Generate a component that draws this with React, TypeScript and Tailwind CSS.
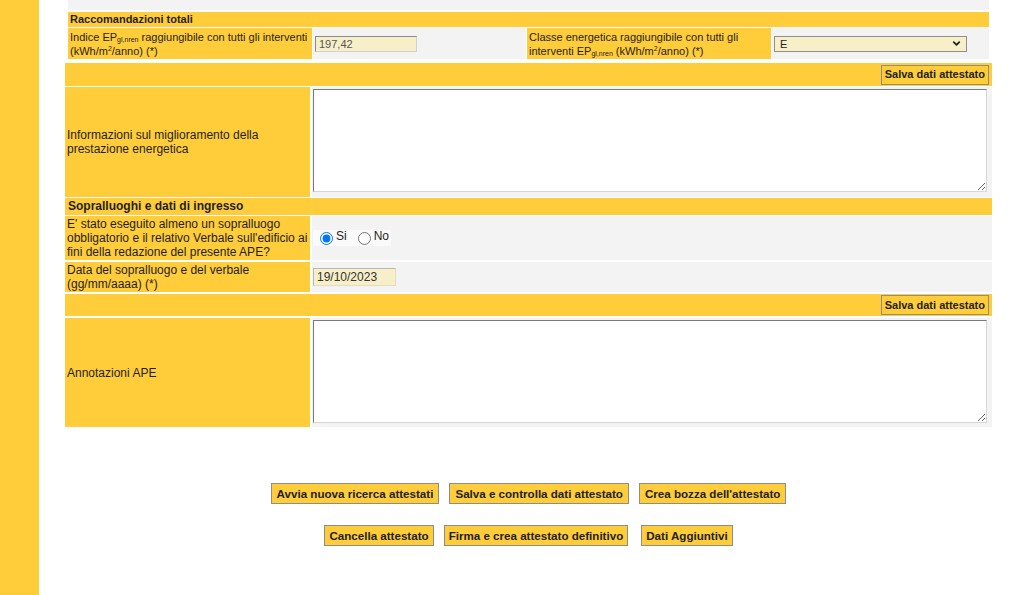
import { ChevronDown } from 'lucide-react'

function SaveBar({ h }: { h: string }) {
  return (
    <div className={`flex items-center justify-end bg-[#ffcc3a] pr-[3px] ${h}`}>
      <button className="h-[20px] border border-[#8c8c8c] bg-[#ffcc3a] px-[3px] text-[11px] font-bold leading-none text-[#222]">
        Salva dati attestato
      </button>
    </div>
  )
}

function ActionButton({ label, className = '' }: { label: string; className?: string }) {
  return (
    <button
      className={`h-[21px] border border-[#8c8c8c] bg-[#ffcc3a] text-[11.6px] font-bold leading-none text-[#222] ${className}`}
    >
      {label}
    </button>
  )
}

export default function App() {
  return (
    <div className="flex h-[595px] overflow-hidden bg-white font-['Liberation_Sans',Arial,sans-serif] text-[#1f1f1f]">
      <div className="w-[39px] shrink-0 bg-[#ffcc3a]" />

      <div className="flex-1">
        <div className="ml-[26px] w-[927px]">
          {/* Raccomandazioni totali */}
          <div className="mx-[3px] text-[11px] leading-[14px]">
            <div className="h-[10px] bg-[#f3f3f3]" />
            <div className="mt-[2px] h-[15px] bg-[#ffcc3a] px-[2px] font-bold leading-[15px]">
              Raccomandazioni totali
            </div>
            <div className="mt-px grid h-[31px] grid-cols-[244px_213px_244px_1fr] gap-px">
              <div className="flex items-center bg-[#ffcc3a] px-[2px]">
                <p>
                  Indice EP<sub className="text-[7px]">gl,nren</sub> raggiungibile con tutti gli interventi
                  (kWh/m<sup className="text-[7px]">2</sup>/anno) (*)
                </p>
              </div>
              <div className="flex items-center bg-[#f3f3f3]">
                <input
                  readOnly
                  value="197,42"
                  className="ml-[2px] h-[16px] w-[102px] border border-[#d0d0d0] border-t-[#8a8a8a] border-l-[#8a8a8a] bg-[#f7efc8] px-[3px] text-[11px] text-[#555]"
                />
              </div>
              <div className="flex items-center bg-[#ffcc3a] px-[2px]">
                <p>
                  Classe energetica raggiungibile con tutti gli interventi EP
                  <sub className="text-[7px]">gl,nren</sub> (kWh/m<sup className="text-[7px]">2</sup>/anno) (*)
                </p>
              </div>
              <div className="flex items-center bg-[#f3f3f3]">
                <div className="ml-[2px] flex h-[16px] w-[193px] items-center justify-between border border-[#8f8f8f] bg-[#f7efc8] pl-[5px] pr-[4px] text-[11px] text-[#222]">
                  <span>E</span>
                  <ChevronDown size={11} strokeWidth={4} />
                </div>
              </div>
            </div>
          </div>

          {/* Informazioni */}
          <div className="mt-[4px] text-[12px] leading-[14px]">
            <SaveBar h="h-[23px]" />
            <div className="mt-px grid h-[110px] grid-cols-[245px_1fr] gap-[2px]">
              <div className="flex items-center bg-[#ffcc3a] px-[2px]">
                Informazioni sul miglioramento della prestazione energetica
              </div>
              <div className="bg-[#f3f3f3] pl-px pt-[2px]">
                <textarea className="block h-[103px] w-[674px] border border-[#d6d6d6] border-t-[#7a7a7a] border-l-[#7a7a7a] bg-white" />
              </div>
            </div>

            {/* Sopralluoghi */}
            <div className="mt-px h-[17px] bg-[#ffcc3a] px-[3px] font-bold leading-[17px]">
              Sopralluoghi e dati di ingresso
            </div>
            <div className="mt-px grid h-[44px] grid-cols-[245px_1fr] gap-[2px]">
              <div className="flex items-center bg-[#ffcc3a] px-[2px]">
                E' stato eseguito almeno un sopralluogo obbligatorio e il relativo Verbale sull'edificio ai fini della
                redazione del presente APE?
              </div>
              <div className="flex items-center bg-[#f3f3f3] pl-px">
                <div className="flex h-[16px] items-center bg-[#fafafa] pr-[2px]">
                  <input type="radio" name="sopralluogo" defaultChecked className="m-0 ml-[7px] h-[13px] w-[13px]" />
                  <span className="ml-[3px] -mt-[5px]">Si</span>
                  <input type="radio" name="sopralluogo" className="m-0 ml-[11px] h-[13px] w-[13px]" />
                  <span className="ml-[3px] -mt-[5px]">No</span>
                </div>
              </div>
            </div>
            <div className="mt-[2px] grid h-[30px] grid-cols-[245px_1fr] gap-[2px]">
              <div className="flex items-center bg-[#ffcc3a] px-[2px]">
                Data del sopralluogo e del verbale (gg/mm/aaaa) (*)
              </div>
              <div className="flex items-center bg-[#f3f3f3] pl-px">
                <input
                  readOnly
                  value="19/10/2023"
                  className="h-[18px] w-[83px] border border-[#e2dcc0] border-t-[#b8b8b8] border-l-[#b8b8b8] bg-[#f7efc8] px-[3px] text-[12px] text-[#333]"
                />
              </div>
            </div>

            <div className="mt-[2px]">
              <SaveBar h="h-[22px]" />
            </div>

            <div className="mt-[2px] grid h-[109px] grid-cols-[245px_1fr] gap-[2px]">
              <div className="flex items-center bg-[#ffcc3a] px-[2px]">Annotazioni APE</div>
              <div className="bg-[#f3f3f3] pl-px pt-[2px]">
                <textarea className="block h-[103px] w-[674px] border border-[#d6d6d6] border-t-[#7a7a7a] border-l-[#7a7a7a] bg-white" />
              </div>
            </div>
          </div>

          {/* Azioni */}
          <div className="mt-[56px] flex justify-center gap-[10px]">
            <ActionButton label="Avvia nuova ricerca attestati" className="px-[5px]" />
            <ActionButton label="Salva e controlla dati attestato" className="px-[5px]" />
            <ActionButton label="Crea bozza dell'attestato" className="px-[5px]" />
          </div>
          <div className="mt-[21px] flex justify-center">
            <ActionButton label="Cancella attestato" className="px-[4px]" />
            <ActionButton label="Firma e crea attestato definitivo" className="ml-[10px] px-[4px]" />
            <ActionButton label="Dati Aggiuntivi" className="ml-[13px] px-[4px]" />
          </div>
        </div>
      </div>
    </div>
  )
}
